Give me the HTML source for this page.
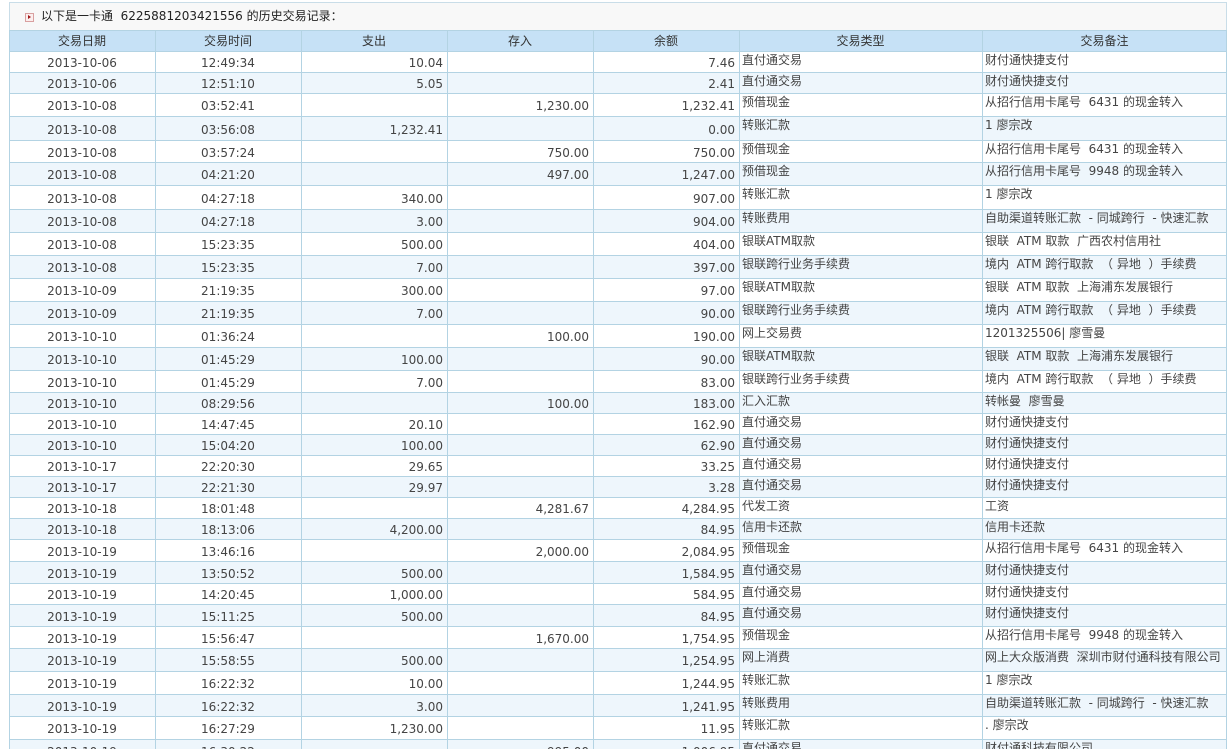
<!DOCTYPE html>
<html><head><meta charset="utf-8">
<style>
html,body{margin:0;padding:0;background:#fff;width:1232px;height:749px;overflow:hidden;position:relative}
body{font-family:"DejaVu Sans","Noto Sans CJK SC",sans-serif;font-size:12px;color:#444;line-height:16px}
.title{position:absolute;left:9px;top:2px;width:1216px;height:28px;background:#f8f8f8;border:1px solid #c9dde8;border-bottom:none}
.title .ic{position:absolute;left:15px;top:10px;width:7px;height:7px;border:1px solid #d9a0a0;background:#fbeeee}
.title .ic:after{content:"";position:absolute;left:2px;top:1px;border-left:3px solid #a01818;border-top:2.5px solid transparent;border-bottom:2.5px solid transparent}
.title span{position:absolute;left:31px;top:5px;color:#222}
.r{position:absolute;left:9px;width:1218px;box-sizing:border-box;border-top:1px solid #b3d3e3;background:#fff}
.r.b{background:#eef6fc}
.r.h{background:#c6e1f6;color:#333}
.r>span{position:absolute;top:0;bottom:0;display:flex;white-space:nowrap;overflow:hidden;box-sizing:border-box}
.r>span:nth-child(1){left:0;width:146px}
.r>span:nth-child(2){left:146px;width:146px}
.r>span:nth-child(3){left:292px;width:146px}
.r>span:nth-child(4){left:438px;width:146px}
.r>span:nth-child(5){left:584px;width:146px}
.r>span:nth-child(6){left:730px;width:243px}
.r>span:nth-child(7){left:973px;width:245px}
.r>span{align-items:center;justify-content:center;padding-top:2px}
.r>span:nth-child(3),.r>span:nth-child(4),.r>span:nth-child(5){justify-content:flex-end;padding-right:4px}
.r>span:nth-child(6),.r>span:nth-child(7){justify-content:flex-start;align-items:flex-start;padding:0 0 0 3px}
.r.h>span{justify-content:center!important;align-items:center!important;padding:0!important}
.v{position:absolute;top:30px;height:720px;width:1px;background:#b3d3e3}
</style></head><body>
<div class="title"><div class="ic"></div><span>以下是一卡通&nbsp; 6225881203421556 的历史交易记录：</span></div>
<div class="r h" style="top:30px;height:21px"><span>交易日期</span><span>交易时间</span><span>支出</span><span>存入</span><span>余额</span><span>交易类型</span><span>交易备注</span></div>
<div class="r" style="top:51px;height:21px"><span>2013-10-06</span><span>12:49:34</span><span>10.04</span><span></span><span>7.46</span><span>直付通交易</span><span>财付通快捷支付</span></div>
<div class="r b" style="top:72px;height:21px"><span>2013-10-06</span><span>12:51:10</span><span>5.05</span><span></span><span>2.41</span><span>直付通交易</span><span>财付通快捷支付</span></div>
<div class="r" style="top:93px;height:23px"><span>2013-10-08</span><span>03:52:41</span><span></span><span>1,230.00</span><span>1,232.41</span><span>预借现金</span><span>从招行信用卡尾号&nbsp; 6431 的现金转入</span></div>
<div class="r b" style="top:116px;height:24px"><span>2013-10-08</span><span>03:56:08</span><span>1,232.41</span><span></span><span>0.00</span><span>转账汇款</span><span>1 廖宗改</span></div>
<div class="r" style="top:140px;height:22px"><span>2013-10-08</span><span>03:57:24</span><span></span><span>750.00</span><span>750.00</span><span>预借现金</span><span>从招行信用卡尾号&nbsp; 6431 的现金转入</span></div>
<div class="r b" style="top:162px;height:23px"><span>2013-10-08</span><span>04:21:20</span><span></span><span>497.00</span><span>1,247.00</span><span>预借现金</span><span>从招行信用卡尾号&nbsp; 9948 的现金转入</span></div>
<div class="r" style="top:185px;height:24px"><span>2013-10-08</span><span>04:27:18</span><span>340.00</span><span></span><span>907.00</span><span>转账汇款</span><span>1 廖宗改</span></div>
<div class="r b" style="top:209px;height:23px"><span>2013-10-08</span><span>04:27:18</span><span>3.00</span><span></span><span>904.00</span><span>转账费用</span><span>自助渠道转账汇款&nbsp; - 同城跨行&nbsp; - 快速汇款</span></div>
<div class="r" style="top:232px;height:23px"><span>2013-10-08</span><span>15:23:35</span><span>500.00</span><span></span><span>404.00</span><span>银联ATM取款</span><span>银联&nbsp; ATM 取款&nbsp; 广西农村信用社</span></div>
<div class="r b" style="top:255px;height:23px"><span>2013-10-08</span><span>15:23:35</span><span>7.00</span><span></span><span>397.00</span><span>银联跨行业务手续费</span><span>境内&nbsp; ATM 跨行取款&nbsp; （ 异地&nbsp; ）手续费</span></div>
<div class="r" style="top:278px;height:23px"><span>2013-10-09</span><span>21:19:35</span><span>300.00</span><span></span><span>97.00</span><span>银联ATM取款</span><span>银联&nbsp; ATM 取款&nbsp; 上海浦东发展银行</span></div>
<div class="r b" style="top:301px;height:23px"><span>2013-10-09</span><span>21:19:35</span><span>7.00</span><span></span><span>90.00</span><span>银联跨行业务手续费</span><span>境内&nbsp; ATM 跨行取款&nbsp; （ 异地&nbsp; ）手续费</span></div>
<div class="r" style="top:324px;height:23px"><span>2013-10-10</span><span>01:36:24</span><span></span><span>100.00</span><span>190.00</span><span>网上交易费</span><span>1201325506| 廖雪曼</span></div>
<div class="r b" style="top:347px;height:23px"><span>2013-10-10</span><span>01:45:29</span><span>100.00</span><span></span><span>90.00</span><span>银联ATM取款</span><span>银联&nbsp; ATM 取款&nbsp; 上海浦东发展银行</span></div>
<div class="r" style="top:370px;height:22px"><span>2013-10-10</span><span>01:45:29</span><span>7.00</span><span></span><span>83.00</span><span>银联跨行业务手续费</span><span>境内&nbsp; ATM 跨行取款&nbsp; （ 异地&nbsp; ）手续费</span></div>
<div class="r b" style="top:392px;height:21px"><span>2013-10-10</span><span>08:29:56</span><span></span><span>100.00</span><span>183.00</span><span>汇入汇款</span><span>转帐曼&nbsp; 廖雪曼</span></div>
<div class="r" style="top:413px;height:21px"><span>2013-10-10</span><span>14:47:45</span><span>20.10</span><span></span><span>162.90</span><span>直付通交易</span><span>财付通快捷支付</span></div>
<div class="r b" style="top:434px;height:21px"><span>2013-10-10</span><span>15:04:20</span><span>100.00</span><span></span><span>62.90</span><span>直付通交易</span><span>财付通快捷支付</span></div>
<div class="r" style="top:455px;height:21px"><span>2013-10-17</span><span>22:20:30</span><span>29.65</span><span></span><span>33.25</span><span>直付通交易</span><span>财付通快捷支付</span></div>
<div class="r b" style="top:476px;height:21px"><span>2013-10-17</span><span>22:21:30</span><span>29.97</span><span></span><span>3.28</span><span>直付通交易</span><span>财付通快捷支付</span></div>
<div class="r" style="top:497px;height:21px"><span>2013-10-18</span><span>18:01:48</span><span></span><span>4,281.67</span><span>4,284.95</span><span>代发工资</span><span>工资</span></div>
<div class="r b" style="top:518px;height:21px"><span>2013-10-18</span><span>18:13:06</span><span>4,200.00</span><span></span><span>84.95</span><span>信用卡还款</span><span>信用卡还款</span></div>
<div class="r" style="top:539px;height:22px"><span>2013-10-19</span><span>13:46:16</span><span></span><span>2,000.00</span><span>2,084.95</span><span>预借现金</span><span>从招行信用卡尾号&nbsp; 6431 的现金转入</span></div>
<div class="r b" style="top:561px;height:22px"><span>2013-10-19</span><span>13:50:52</span><span>500.00</span><span></span><span>1,584.95</span><span>直付通交易</span><span>财付通快捷支付</span></div>
<div class="r" style="top:583px;height:21px"><span>2013-10-19</span><span>14:20:45</span><span>1,000.00</span><span></span><span>584.95</span><span>直付通交易</span><span>财付通快捷支付</span></div>
<div class="r b" style="top:604px;height:22px"><span>2013-10-19</span><span>15:11:25</span><span>500.00</span><span></span><span>84.95</span><span>直付通交易</span><span>财付通快捷支付</span></div>
<div class="r" style="top:626px;height:22px"><span>2013-10-19</span><span>15:56:47</span><span></span><span>1,670.00</span><span>1,754.95</span><span>预借现金</span><span>从招行信用卡尾号&nbsp; 9948 的现金转入</span></div>
<div class="r b" style="top:648px;height:23px"><span>2013-10-19</span><span>15:58:55</span><span>500.00</span><span></span><span>1,254.95</span><span>网上消费</span><span>网上大众版消费&nbsp; 深圳市财付通科技有限公司</span></div>
<div class="r" style="top:671px;height:23px"><span>2013-10-19</span><span>16:22:32</span><span>10.00</span><span></span><span>1,244.95</span><span>转账汇款</span><span>1 廖宗改</span></div>
<div class="r b" style="top:694px;height:22px"><span>2013-10-19</span><span>16:22:32</span><span>3.00</span><span></span><span>1,241.95</span><span>转账费用</span><span>自助渠道转账汇款&nbsp; - 同城跨行&nbsp; - 快速汇款</span></div>
<div class="r" style="top:716px;height:23px"><span>2013-10-19</span><span>16:27:29</span><span>1,230.00</span><span></span><span>11.95</span><span>转账汇款</span><span>. 廖宗改</span></div>
<div class="r b" style="top:739px;height:23px"><span>2013-10-19</span><span>16:30:22</span><span></span><span>995.00</span><span>1,006.95</span><span>直付通交易</span><span>财付通科技有限公司</span></div>
<div class="v" style="left:9px"></div><div class="v" style="left:155px"></div><div class="v" style="left:301px"></div><div class="v" style="left:447px"></div><div class="v" style="left:593px"></div><div class="v" style="left:739px"></div><div class="v" style="left:982px"></div><div class="v" style="left:1226px"></div>
</body></html>
